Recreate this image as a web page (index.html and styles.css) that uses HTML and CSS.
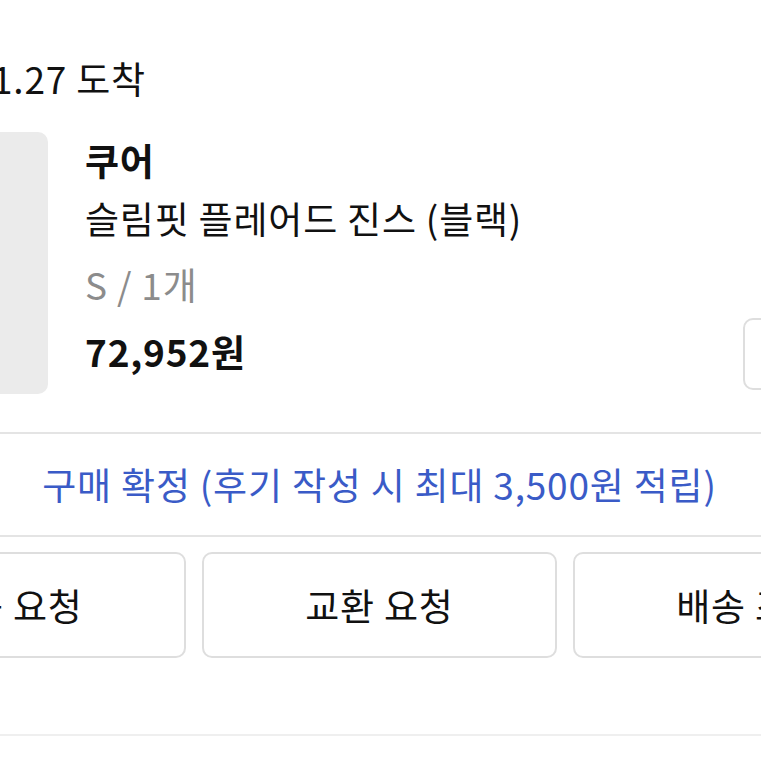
FILE: index.html
```html
<!DOCTYPE html>
<html>
  <head>
    <title>주문 상세</title>
    <link rel="stylesheet" href="styles.css">
  </head>
  <body>
    <div class="page">
      <!-- 주문 상품 -->
      <div class="order">
        <div class="arrival">1.27 도착</div>
        <div class="item">
          <div class="thumb"></div>
          <div class="info">
            <div class="brand">쿠어</div>
            <div class="name">슬림핏 플레어드 진스 (블랙)</div>
            <div class="option">S / 1개</div>
            <div class="price">72,952원</div>
          </div>
          <button type="button" class="cart">재구매</button>
        </div>
      </div>

      <!-- 구매 확정 -->
      <div class="confirm">구매 확정 (후기 작성 시 최대 3,500원 적립)</div>

      <!-- 요청 버튼 -->
      <div class="actions">
        <button type="button" class="action">반품 요청</button>
        <button type="button" class="action">교환 요청</button>
        <button type="button" class="action">배송 조회</button>
      </div>
    </div>
  </body>
</html>
```

FILE: styles.css
```css
/* 기본 */
body {
  margin: 0;
  overflow: hidden;
  background-color: #fff;
  color: #111;
  font-family: "Noto Sans CJK KR", "Noto Sans", sans-serif;
  font-size: 37px;
  letter-spacing: 0.8px;
}

.page {
  width: 1129px;
  margin-left: -185px;
}

/* 주문 상품 */
.order {
  padding: 54px 16px 38px;
  border-bottom: 2px solid #e4e4e4;
}

.arrival {
  line-height: 48px;
  padding-left: 161px;
  margin-bottom: 30px;
}

.item {
  display: flex;
  height: 262px;
}

.thumb {
  width: 217px;
  flex-shrink: 0;
  background-color: #ebebeb;
  border-radius: 10px;
}

.info {
  flex: 1;
  margin-left: 37px;
  padding-top: 4px;
}

.info div {
  line-height: 48px;
}

.brand {
  font-weight: bold;
}

.name {
  margin-top: 10px;
}

.option {
  margin-top: 18px;
  color: #8c8c8c;
}

.price {
  margin-top: 19px;
  font-weight: bold;
}

.cart {
  align-self: flex-end;
  margin-bottom: 4px;
  width: 185px;
  height: 72px;
  font-family: inherit;
  font-size: 28px;
  color: #111;
  background-color: #fff;
  border: 2px solid #dedede;
  border-radius: 10px;
}

/* 구매 확정 */
.confirm {
  height: 101px;
  line-height: 101px;
  text-align: center;
  color: #3a5bc7;
  border-bottom: 2px solid #e4e4e4;
}

/* 요청 버튼 */
.actions {
  display: flex;
  gap: 16px;
  padding: 15px 16px 76px;
  border-bottom: 2px solid #efefef;
}

.action {
  flex: 1;
  height: 106px;
  font-family: inherit;
  font-size: 37px;
  letter-spacing: 0.8px;
  color: #111;
  background-color: #fff;
  border: 2px solid #dedede;
  border-radius: 10px;
}
```
